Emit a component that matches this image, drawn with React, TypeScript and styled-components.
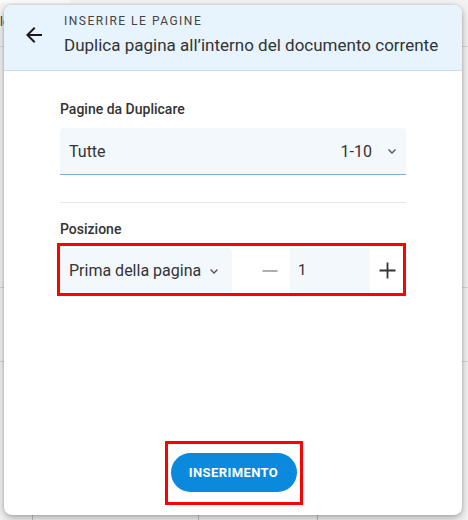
import React from 'react';
import styled, { createGlobalStyle } from 'styled-components';

const GlobalStyle = createGlobalStyle`
  html, body {
    margin: 0;
    padding: 0;
    font-family: Roboto, "Liberation Sans", sans-serif;
    -webkit-font-smoothing: antialiased;
  }
`;

const ArrowLeft = () => (
  <svg width="24" height="24" viewBox="0 0 24 24">
    <path d="M20 11H7.83l5.59-5.59L12 4l-8 8 8 8 1.41-1.41L7.83 13H20v-2z" fill="#1a1a1a" />
  </svg>
);

const Chevron = () => (
  <svg width="12" height="12" viewBox="0 0 12 12">
    <path d="M2.5 4.5L6 8l3.5-3.5" fill="none" stroke="#555" strokeWidth="1.4" />
  </svg>
);

const Minus = () => (
  <svg width="16" height="16" viewBox="0 0 16 16">
    <path d="M0.5 8h15" stroke="#949494" strokeWidth="1.6" />
  </svg>
);

const Plus = () => (
  <svg width="17" height="17" viewBox="0 0 17 17">
    <path d="M0.5 8.5h16M8.5 0.5v16" stroke="#333" strokeWidth="1.8" />
  </svg>
);

export default function App() {
  return (
    <>
      <GlobalStyle />
      <Backdrop>
        <BackTab>le</BackTab>
        <Dialog>
          <Header>
            <BackButton aria-label="Indietro">
              <ArrowLeft />
            </BackButton>
            <HeaderText>
              <Overline>INSERIRE LE PAGINE</Overline>
              <Title>Duplica pagina all’interno del documento corrente</Title>
            </HeaderText>
          </Header>

          <Body>
            <Section>
              <Label>Pagine da Duplicare</Label>
              <Select $underline>
                <SelectValue>Tutte</SelectValue>
                <SelectHint>1-10</SelectHint>
                <Chevron />
              </Select>
            </Section>

            <Divider />

            <Section>
              <Label>Posizione</Label>
              <Marked $pad="2px 0 0 0" $shift="-5px 0 0 -3px">
                <PositionRow>
                  <PositionSelect>
                    <SelectValue>Prima della pagina</SelectValue>
                    <Chevron />
                  </PositionSelect>
                  <StepButton $width={40} $gap={18} aria-label="Meno">
                    <Minus />
                  </StepButton>
                  <NumberBox>1</NumberBox>
                  <StepButton $width={34} $gap={0} aria-label="Più">
                    <Plus />
                  </StepButton>
                </PositionRow>
              </Marked>
            </Section>
          </Body>

          <Footer>
            <Marked $pad="9px 3px 10px 3px" $shift="0">
              <PrimaryButton>INSERIMENTO</PrimaryButton>
            </Marked>
          </Footer>
        </Dialog>
      </Backdrop>
    </>
  );
}

const Backdrop = styled.div`
  position: relative;
  width: 468px;
  height: 520px;
  background: #f3f3f3;
  overflow: hidden;
  padding: 5px 6px 5px 4px;
  box-sizing: border-box;
  background-image:
    linear-gradient(#fafafa, #fafafa),
    linear-gradient(#d8d8d8, #d8d8d8),
    linear-gradient(#d6d6d6, #d6d6d6),
    linear-gradient(#d6d6d6, #d6d6d6),
    linear-gradient(#bdbdbd, #bdbdbd),
    linear-gradient(#bdbdbd, #bdbdbd),
    linear-gradient(#bdbdbd, #bdbdbd);
  background-size: 70px 3px, 100% 1px, 100% 1px, 100% 1px, 1px 10px, 1px 10px, 1px 10px;
  background-position: 0 0, 0 46px, 0 287px, 0 361px, 32px 510px, 198px 510px, 317px 510px;
  background-repeat: no-repeat;
`;

const BackTab = styled.div`
  position: absolute;
  left: 0;
  top: 15px;
  font-size: 12px;
  color: #333;
`;

const Dialog = styled.div`
  position: relative;
  height: 100%;
  display: flex;
  flex-direction: column;
  background: #fff;
  border-radius: 8px;
  overflow: hidden;
  box-shadow: 0 3px 8px rgba(0, 0, 0, 0.3), 0 0 3px rgba(0, 0, 0, 0.15);
`;

const Header = styled.div`
  display: flex;
  align-items: flex-start;
  height: 66px;
  box-sizing: border-box;
  padding: 8px 0 0 18px;
  background: #e7f3fd;
  border-bottom: 1px solid #ccdae6;
`;

const BackButton = styled.button`
  display: flex;
  align-items: center;
  justify-content: center;
  width: 24px;
  height: 24px;
  padding: 0;
  border: 0;
  background: none;
  margin: 10px 18px 0 0;
`;

const HeaderText = styled.div`
  display: flex;
  flex-direction: column;
  gap: 5px;
`;

const Overline = styled.div`
  font-size: 12px;
  letter-spacing: 1.5px;
  color: #444;
  line-height: 16px;
`;

const Title = styled.div`
  font-size: 17px;
  color: #333;
  line-height: 22px;
`;

const Body = styled.div`
  flex: 1;
  padding: 28px 56px 0 56px;
`;

const Section = styled.div`
  display: flex;
  flex-direction: column;
`;

const Label = styled.div`
  font-size: 14px;
  font-weight: 500;
  color: #333;
  line-height: 20px;
  margin-bottom: 9px;
`;

const Select = styled.div<{ $underline?: boolean }>`
  display: flex;
  align-items: center;
  height: 47px;
  padding: 0 8px 0 9px;
  box-sizing: border-box;
  background: #f3f8fd;
  border-radius: 4px 4px 0 0;
  border-bottom: ${(p) => (p.$underline ? '1px solid #7ab0d6' : 'none')};
  gap: 14px;
`;

const SelectValue = styled.span`
  flex: 1 0 auto;
  white-space: nowrap;
  font-size: 16px;
  color: #333;
`;

const SelectHint = styled.span`
  font-size: 16px;
  color: #333;
`;

const Divider = styled.div`
  height: 1px;
  background: #e6e6e6;
  margin: 27px 0 16px;
`;

const Marked = styled.div<{ $pad: string; $shift: string }>`
  display: flex;
  padding: ${(p) => p.$pad};
  margin: ${(p) => p.$shift};
  border: 3px solid #f00;
`;

const PositionRow = styled.div`
  display: flex;
  align-items: stretch;
  flex: 1;
  height: 45px;
`;

const PositionSelect = styled.div`
  display: flex;
  align-items: center;
  width: 172px;
  flex-shrink: 0;
  padding: 0 12px 0 9px;
  box-sizing: border-box;
  background: #f3f8fd;
  border-radius: 4px 4px 0 0;
`;

const StepButton = styled.button<{ $width: number; $gap: number }>`
  display: flex;
  align-items: center;
  justify-content: center;
  width: ${(p) => p.$width}px;
  margin-left: ${(p) => p.$gap}px;
  flex-shrink: 0;
  padding: 0;
  border: 0;
  background: none;
`;

const NumberBox = styled.div`
  display: flex;
  align-items: center;
  width: 80px;
  flex-shrink: 0;
  box-sizing: border-box;
  padding: 0 0 2px 8px;
  background: #f3f8fd;
  font-size: 15px;
  color: #333;
`;

const Footer = styled.div`
  display: flex;
  justify-content: center;
  padding-bottom: 10px;
  padding-left: 1px;
`;

const PrimaryButton = styled.button`
  height: 39px;
  width: 126px;
  border: 0;
  border-radius: 20px;
  background: #0b89dd;
  color: #fff;
  font-family: Roboto, "Liberation Sans", sans-serif;
  font-size: 13px;
  font-weight: 700;
  letter-spacing: 0.4px;
`;
